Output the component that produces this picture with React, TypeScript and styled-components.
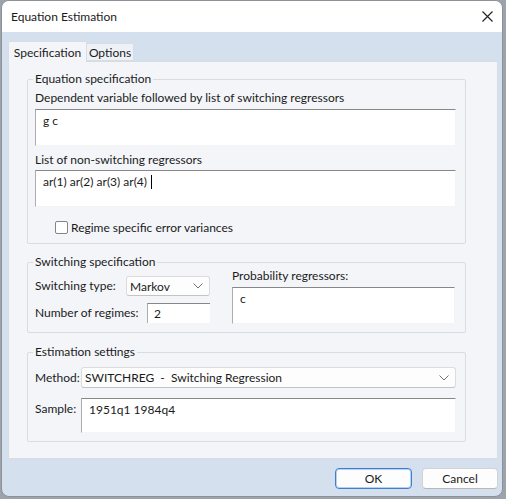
import styled, { createGlobalStyle } from 'styled-components';

const FONT = `Lato, "Noto Sans", sans-serif`;
const PANEL_BG = '#f3f5f9';
const LINE = '#d8dce3';

const GlobalStyle = createGlobalStyle`
  html, body { margin: 0; padding: 0; }
  body {
    background: #9da3ab;
    font-family: ${FONT};
    font-size: 12px;
    color: #1b1b1b;
  }
  * { box-sizing: border-box; }
`;

const Window = styled.div`
  margin-left: 1px;
  width: 502px;
  height: 497px;
  border: 1px solid #8d9199;
  border-radius: 8px;
  overflow: hidden;
  background: #d5e0ee;
  display: flex;
  flex-direction: column;
`;

const TitleBar = styled.div`
  height: 31px;
  flex: none;
  background: #fff;
  display: flex;
  align-items: center;
  justify-content: space-between;
  padding: 0 9px 0 9px;
  line-height: 16px;
`;

const Tabs = styled.div`
  display: flex;
  align-items: flex-end;
  margin-top: 9px;
  padding-left: 6px;
  height: 20px;
  position: relative;
  z-index: 1;
`;

const Tab = styled.div<{ $active?: boolean }>`
  height: ${p => (p.$active ? 21 : 18)}px;
  margin-bottom: ${p => (p.$active ? -1 : 0)}px;
  width: ${p => (p.$active ? 79 : 47)}px;
  display: flex;
  align-items: center;
  justify-content: center;
  background: ${p => (p.$active ? PANEL_BG : '#eef1f6')};
  border: 1px solid ${LINE};
  border-bottom: ${p => (p.$active ? 'none' : `1px solid ${LINE}`)};
  border-left: ${p => (p.$active ? `1px solid ${LINE}` : 'none')};
`;

const Panel = styled.div`
  margin: 0 4px 0 6px;
  height: 398px;
  border: 1px solid ${LINE};
  background: ${PANEL_BG};
  padding: 9px 31px 0 18px;
`;

const Group = styled.fieldset<{ $gap?: number }>`
  margin: ${p => p.$gap ?? 0}px 0 0;
  border: 1px solid ${LINE};
  border-radius: 2px;
  padding: 0 9px 8px 7px;
  min-width: 0;

  legend {
    padding: 0 2px;
    margin-left: -2px;
    line-height: 16px;
  }
`;

const Label = styled.div<{ $top?: number }>`
  margin-top: ${p => p.$top ?? 0}px;
  line-height: 16px;
  white-space: nowrap;
`;

const TextBox = styled.div<{ $top?: number; $height: number }>`
  margin-top: ${p => p.$top ?? 0}px;
  height: ${p => p.$height}px;
  background: #fff;
  border-top: 1px solid #878787;
  border-left: 1px solid #adadad;
  border-right: 1px solid #f4f4f4;
  border-bottom: 1px solid #f4f4f4;
  padding: 4px 6px 0 7px;
  line-height: 14px;
  white-space: nowrap;
`;

const Caret = styled.span`
  display: inline-block;
  width: 1px;
  height: 14px;
  background: #000;
  vertical-align: top;
  margin-left: 1px;
`;

const CheckRow = styled.label`
  margin-top: 12px;
  height: 16px;
  padding-left: 20px;
  display: flex;
  align-items: center;
  gap: 3px;
`;

const CheckBox = styled.span`
  width: 13px;
  height: 13px;
  border: 1px solid #858585;
  border-radius: 2px;
  background: #fff;
`;

const SwitchGrid = styled.div`
  display: grid;
  grid-template-columns: 175px 223px;
  column-gap: 22px;
`;

const FieldRow = styled.div<{ $top: number; $height?: number }>`
  margin-top: ${p => p.$top}px;
  height: ${p => p.$height ?? 20}px;
  display: flex;
  align-items: center;
  justify-content: space-between;
`;

const Select = styled.div<{ $width?: number }>`
  width: ${p => (p.$width ? `${p.$width}px` : 'auto')};
  flex: ${p => (p.$width ? 'none' : 1)};
  height: 100%;
  background: #fdfdfd;
  border: 1px solid #dcdcdc;
  border-bottom-color: #c4c4c4;
  border-radius: 3px;
  display: flex;
  align-items: center;
  justify-content: space-between;
  padding: 0 6px 0 3px;
  white-space: nowrap;

  svg { flex: none; }
`;

const Input = styled.div<{ $width: number }>`
  width: ${p => p.$width}px;
  height: 100%;
  background: #fff;
  border-top: 1px solid #878787;
  border-left: 1px solid #adadad;
  padding: 2px 6px 0;
  line-height: 16px;
`;

const SideLabel = styled.div`
  width: 46px;
  flex: none;
  line-height: 16px;
`;

const SampleRow = styled.div`
  margin-top: 10px;
  display: flex;

  ${SideLabel} { padding-top: 3px; }
  ${TextBox} { flex: 1; }
`;

const Footer = styled.div`
  display: flex;
  justify-content: flex-end;
  gap: 10px;
  margin-top: 9px;
  padding-right: 4px;
`;

const Button = styled.div<{ $primary?: boolean; $width: number }>`
  width: ${p => p.$width}px;
  height: 21px;
  background: #fdfdfd;
  border: 1px solid ${p => (p.$primary ? '#3f7fd0' : '#d2d2d2')};
  border-bottom-color: ${p => (p.$primary ? '#3f7fd0' : '#b8b8b8')};
  box-shadow: ${p => (p.$primary ? 'inset 0 0 0 1px #b9d0ee' : 'none')};
  border-radius: 4px;
  display: flex;
  align-items: center;
  justify-content: center;
`;

const Chevron = () => (
  <svg width="10" height="6" viewBox="0 0 10 6">
    <path d="M0.5 0.5 L5 5 L9.5 0.5" fill="none" stroke="#6f6f6f" strokeWidth="1" />
  </svg>
);

export default function App() {
  return (
    <>
      <GlobalStyle />
      <Window>
        <TitleBar>
          <span>Equation Estimation</span>
          <svg width="11" height="11" viewBox="0 0 11 11">
            <path d="M0.5 0.5 L10.5 10.5 M10.5 0.5 L0.5 10.5" stroke="#1f1f1f" strokeWidth="1.1" />
          </svg>
        </TitleBar>

        <Tabs>
          <Tab $active>Specification</Tab>
          <Tab>Options</Tab>
        </Tabs>

        <Panel>
          <Group>
            <legend>Equation specification</legend>
            <Label $top={3}>Dependent variable followed by list of switching regressors</Label>
            <TextBox $top={3} $height={37}>g c</TextBox>
            <Label $top={6}>List of non-switching regressors</Label>
            <TextBox $top={2} $height={37}>
              ar(1) ar(2) ar(3) ar(4) <Caret />
            </TextBox>
            <CheckRow>
              <CheckBox />
              Regime specific error variances
            </CheckRow>
          </Group>

          <Group $gap={10}>
            <legend>Switching specification</legend>
            <SwitchGrid>
              <div>
                <FieldRow $top={6}>
                  <Label>Switching type:</Label>
                  <Select $width={84}>
                    Markov
                    <Chevron />
                  </Select>
                </FieldRow>
                <FieldRow $top={7}>
                  <Label>Number of regimes:</Label>
                  <Input $width={63}>2</Input>
                </FieldRow>
              </div>
              <div>
                <Label $top={-2}>Probability regressors:</Label>
                <TextBox $top={3} $height={37}>c</TextBox>
              </div>
            </SwitchGrid>
          </Group>

          <Group $gap={11}>
            <legend>Estimation settings</legend>
            <FieldRow $top={7} $height={21}>
              <SideLabel>Method:</SideLabel>
              <Select>
                SWITCHREG&nbsp; - &nbsp;Switching Regression
                <Chevron />
              </Select>
            </FieldRow>
            <SampleRow>
              <SideLabel>Sample:</SideLabel>
              <TextBox $height={35}>1951q1 1984q4</TextBox>
            </SampleRow>
          </Group>
        </Panel>

        <Footer>
          <Button $primary $width={77}>OK</Button>
          <Button $width={76}>Cancel</Button>
        </Footer>
      </Window>
    </>
  );
}
